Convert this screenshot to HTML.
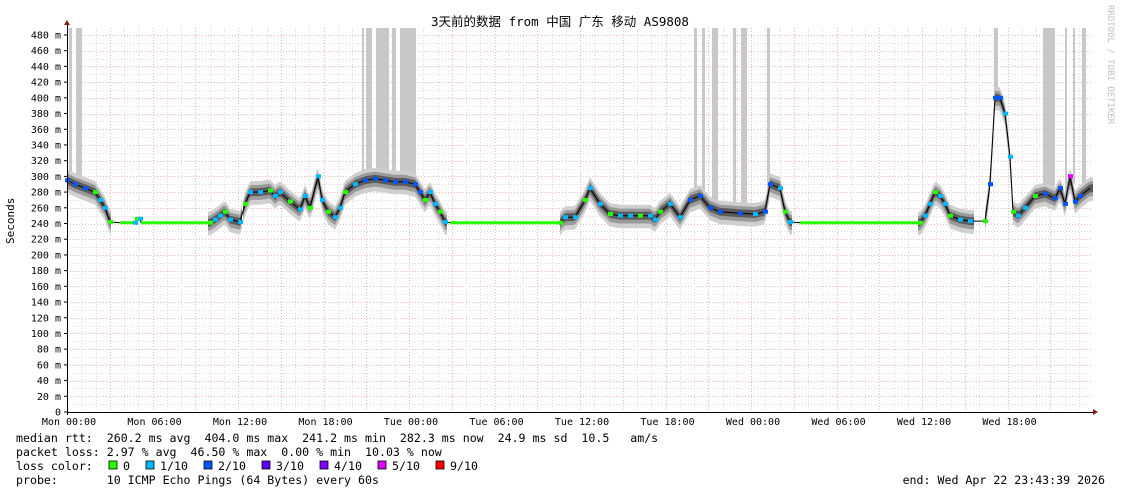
<!DOCTYPE html>
<html><head><meta charset="utf-8">
<style>
html,body{margin:0;padding:0;background:#fff;width:1121px;height:494px;overflow:hidden}
svg{display:block}
text{font-family:"DejaVu Sans Mono","Liberation Mono","Noto Sans CJK SC",monospace}
</style></head>
<body>
<svg id="g" width="1121" height="494" xmlns="http://www.w3.org/2000/svg">
<text x="560" y="26" font-size="12.5" text-anchor="middle" fill="#000">3天前的数据 from 中国 广东 移动 AS9808</text>
<text transform="translate(1108,5) rotate(90)" font-size="9" fill="#c0c0c0">RRDTOOL / TOBI OETIKER</text>
<text transform="translate(14,244) rotate(-90)" font-size="11" fill="#000">Seconds</text>
<g id="grid"></g>
<g id="loss"></g>
<g id="smoke"></g>
<g id="line"></g>
<g id="axes"></g>
<g font-size="11.6" fill="#000">
<text x="16" y="442" xml:space="preserve">median rtt:  260.2 ms avg  404.0 ms max  241.2 ms min  282.3 ms now  24.9 ms sd  10.5   am/s</text>
<text x="16" y="456" xml:space="preserve">packet loss: 2.97 % avg  46.50 % max  0.00 % min  10.03 % now</text>
<text x="16" y="470" xml:space="preserve">loss color:  </text>
<text x="16" y="484" xml:space="preserve">probe:       10 ICMP Echo Pings (64 Bytes) every 60s</text>
<text x="1105" y="484" text-anchor="end" xml:space="preserve">end: Wed Apr 22 23:43:39 2026</text>
</g>
<g id="leg"></g>
</svg>
<script>
var NS="http://www.w3.org/2000/svg";
function el(p,t,a){var e=document.createElementNS(NS,t);for(var k in a)e.setAttribute(k,a[k]);p.appendChild(e);return e;}
var X0=67,X1=1093,Y0=412,YT=28,PH=14.25;
function vy(v){return Y0-v*0.7854;}
var grid=document.getElementById('grid');
for(var v=10;v<=490;v+=10){var y=Math.round(vy(v))+0.5;if(y<YT)break;
 var major=(v%20==0);
 el(grid,'line',{x1:X0,x2:X1,y1:y,y2:y,stroke:major?'#f2b8b8':'#dcdcdc','stroke-width':1,'stroke-dasharray':'1,2'});}
for(var h=1;h<=72;h++){var x=Math.round(X0+h*PH)+0.5;if(x>X1)break;
 var major=(h%3==0);
 el(grid,'line',{x1:x,x2:x,y1:YT,y2:Y0,stroke:major?'#f2b8b8':'#dcdcdc','stroke-width':1,'stroke-dasharray':'1,2'});}
var lb=[[69,72],[76,82],[362,364],[366,372],[376,389],[392,396],[400,416],[694,697],[702,705],[712,718],[733,736],[741,747],[767,770],[994,998],[1043,1055],[1065,1067],[1073,1075],[1082,1086]];
var loss=document.getElementById('loss');
var pts=[[67,295],[75,290],[85,285],[95,280],[100,270],[105,260],[110,242],[120,241],[135,241],[137,246],[140,246],[141,241],[210,241],[215,245],[220,250],[225,255],[230,245],[240,242],[245,265],[250,280],[260,280],[270,282],[275,275],[280,280],[290,268],[300,258],[305,275],[310,260],[318,300],[322,270],[328,255],[335,248],[340,260],[345,280],[355,290],[365,295],[375,297],[385,295],[395,293],[405,293],[415,290],[420,280],[425,270],[430,280],[435,265],[440,255],[445,242],[450,241],[560,241],[565,248],[575,248],[585,270],[590,285],[600,265],[610,252],[620,250],[630,250],[640,250],[650,250],[655,245],[660,255],[670,265],[680,248],[690,270],[700,275],[710,260],[720,255],[740,253],[755,252],[765,255],[770,290],[780,285],[785,255],[790,242],[800,241],[920,241],[925,250],[930,265],[935,280],[940,275],[945,265],[950,250],[960,245],[970,243],[985,243],[990,290],[995,400],[1000,400],[1005,380],[1010,325],[1013,255],[1018,250],[1025,260],[1035,275],[1045,278],[1055,272],[1060,285],[1065,265],[1070,300],[1075,268],[1080,275],[1090,285]];
function valAt(x){for(var i=1;i<pts.length;i++){if(pts[i][0]>=x){var a=pts[i-1],b=pts[i];var t=(x-a[0])/((b[0]-a[0])||1);return a[1]+(b[1]-a[1])*t;}}return pts[pts.length-1][1];}
lb.forEach(function(b){var y=vy(valAt(b[0])+10);el(loss,'rect',{x:b[0],y:YT,width:b[1]-b[0],height:Math.max(0,y-YT),fill:'#c8c8c8'});});
var smoke=document.getElementById('smoke');
var segs=[[67,112],[208,243],[243,447],[560,792],[918,975],[985,1093]];
function band(s,up,dn,col){
 var top=[],bot=[];
 for(var x=s[0];x<=s[1];x+=2){var v=valAt(x);top.push(x+','+vy(v+up).toFixed(1));bot.unshift(x+','+vy(v-dn).toFixed(1));}
 el(smoke,'polygon',{points:top.concat(bot).join(' '),fill:col});
}
segs.forEach(function(s){
 band(s,14,16,'#cfcfcf');
 band(s,9,10,'#9a9a9a');
 band(s,5,5,'#5a5a5a');
});
var line=document.getElementById('line');
var P=pts.map(function(p){return p[0]+','+vy(p[1]).toFixed(1)}).join(' ');
el(line,'polyline',{points:P,fill:'none',stroke:'#000','stroke-width':1});
for(var i=0;i<pts.length-1;i++){var a=pts[i],b=pts[i+1];
 var flat=Math.abs(a[1]-b[1])<1 && a[1]<243;
 var c;
 if(flat){el(line,'line',{x1:a[0],x2:b[0],y1:vy(a[1]),y2:vy(b[1]),stroke:'#26ff00','stroke-width':3});}
 else { var inLoss=lb.some(function(q){return a[0]>=q[0]-6&&a[0]<=q[1]+6}); c=inLoss?'#0055ff':((i%3==0)?'#26ff00':'#00b8ff');
  el(line,'rect',{x:a[0]-2,y:vy(a[1])-2,width:5,height:4,fill:c});}
}
el(line,'rect',{x:1068,y:vy(300)-2,width:5,height:4,fill:'#e600ff'});
var ax=document.getElementById('axes');
el(ax,'line',{x1:X0,x2:1095,y1:Y0+0.5,y2:Y0+0.5,stroke:'#000','stroke-width':1});
el(ax,'line',{x1:X0+0.5,x2:X0+0.5,y1:Y0+3,y2:24,stroke:'#000','stroke-width':1});
el(ax,'polygon',{points:'1093,409 1098,412 1093,415',fill:'#8b1a1a'});
el(ax,'polygon',{points:'64,25 67,20 70,25',fill:'#8b1a1a'});
for(var v=0;v<=480;v+=20){var y=vy(v);
 el(ax,'line',{x1:X0-3,x2:X0,y1:y,y2:y,stroke:'#000'});
 var t=el(ax,'text',{x:61,y:y+3.5,'font-size':10,'text-anchor':'end',fill:'#000'});t.textContent=v==0?'0':v+' m';}
var labs=['Mon 00:00','Mon 06:00','Mon 12:00','Mon 18:00','Tue 00:00','Tue 06:00','Tue 12:00','Tue 18:00','Wed 00:00','Wed 06:00','Wed 12:00','Wed 18:00'];
labs.forEach(function(l,i){var x=X0+i*6*PH;var t=el(ax,'text',{x:x+2,y:425,'font-size':10,'text-anchor':'middle',fill:'#000'});t.textContent=l;});
var leg=document.getElementById('leg');
var items=[['#26ff00','0'],['#00b8ff','1/10'],['#0059ff','2/10'],['#5e00ff','3/10'],['#7e00ff','4/10'],['#dd00ff','5/10'],['#ff0000','9/10']];
var lx=109;
items.forEach(function(it){el(leg,'rect',{x:lx,y:461,width:8,height:8,fill:it[0],stroke:'#000','stroke-width':0.8});
 var t=el(leg,'text',{x:lx+14,y:470,'font-size':11.6,fill:'#000'});t.textContent=it[1];
 lx+= (it[1].length==1?37:58);});
</script>
</body></html>
